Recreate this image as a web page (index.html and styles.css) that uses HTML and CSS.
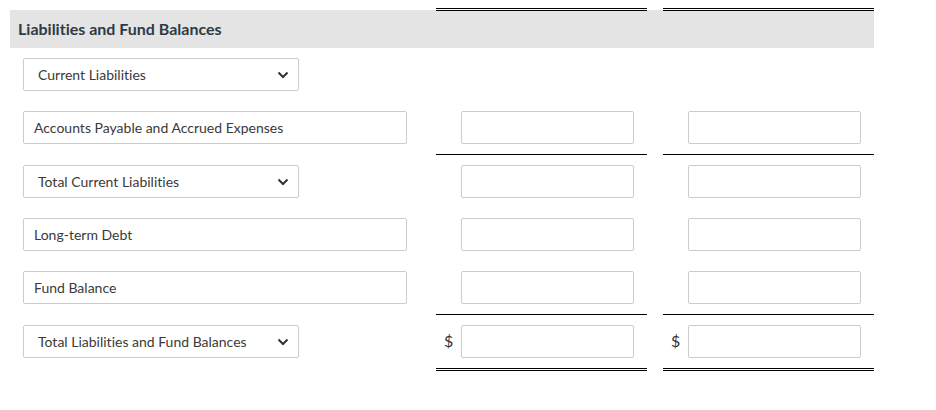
FILE: index.html
```html
<!DOCTYPE html>
<html>
<head>
<meta charset="utf-8">
<link rel="stylesheet" href="styles.css">
</head>
<body>
<div class="sheet">
  <div class="row top">
    <div class="label-cell"></div>
    <div class="num-cell dbl"></div>
    <div class="spacer"></div>
    <div class="num-cell dbl"></div>
  </div>
  <div class="heading">Liabilities and Fund Balances</div>

  <div class="row">
    <div class="label-cell">
      <div class="select"><span>Current Liabilities</span><svg class="chev" width="12" height="8" viewBox="0 0 12 8"><polyline points="1.5,1.5 6,6 10.5,1.5" fill="none" stroke="#333" stroke-width="2"/></svg></div>
    </div>
    <div class="num-cell"></div>
    <div class="spacer"></div>
    <div class="num-cell"></div>
  </div>

  <div class="row">
    <div class="label-cell"><div class="text">Accounts Payable and Accrued Expenses</div></div>
    <div class="num-cell single"><div class="box"></div></div>
    <div class="spacer"></div>
    <div class="num-cell single"><div class="box"></div></div>
  </div>

  <div class="row">
    <div class="label-cell">
      <div class="select"><span>Total Current Liabilities</span><svg class="chev" width="12" height="8" viewBox="0 0 12 8"><polyline points="1.5,1.5 6,6 10.5,1.5" fill="none" stroke="#333" stroke-width="2"/></svg></div>
    </div>
    <div class="num-cell"><div class="box"></div></div>
    <div class="spacer"></div>
    <div class="num-cell"><div class="box"></div></div>
  </div>

  <div class="row">
    <div class="label-cell"><div class="text">Long-term Debt</div></div>
    <div class="num-cell"><div class="box"></div></div>
    <div class="spacer"></div>
    <div class="num-cell"><div class="box"></div></div>
  </div>

  <div class="row">
    <div class="label-cell"><div class="text">Fund Balance</div></div>
    <div class="num-cell single"><div class="box"></div></div>
    <div class="spacer"></div>
    <div class="num-cell single"><div class="box"></div></div>
  </div>

  <div class="row">
    <div class="label-cell">
      <div class="select"><span>Total Liabilities and Fund Balances</span><svg class="chev" width="12" height="8" viewBox="0 0 12 8"><polyline points="1.5,1.5 6,6 10.5,1.5" fill="none" stroke="#333" stroke-width="2"/></svg></div>
    </div>
    <div class="num-cell dbl"><span class="dollar">$</span><div class="box"></div></div>
    <div class="spacer"></div>
    <div class="num-cell dbl"><span class="dollar">$</span><div class="box"></div></div>
  </div>
</div>
</body>
</html>
```
FILE: styles.css
```css
html, body {
  margin: 0;
  padding: 0;
  background: #ffffff;
}
body {
  font-family: Lato, "Open Sans", sans-serif;
  color: #3a3a3a;
  font-variant-ligatures: none;
}
.sheet {
  margin-left: 10px;
  width: 864px;
}
.row {
  display: flex;
  align-items: stretch;
}
.label-cell {
  width: 426px;
  padding: 10px 0 10px 13px;
  box-sizing: border-box;
}
.num-cell {
  width: 211px;
  padding: 10px 0 10px 25px;
  box-sizing: border-box;
  position: relative;
}
.spacer {
  width: 16px;
}
.row.top .label-cell,
.row.top .num-cell {
  height: 11px;
  padding: 0;
}
.num-cell.dbl {
  border-bottom: 3px double #000;
}
.num-cell.single {
  border-bottom: 1px solid #000;
}
.row.top + .heading {
  margin-top: -1px;
}
.heading {
  height: 38px;
  background: #e4e4e4;
  box-sizing: border-box;
  padding: 9px 0 0 8px;
  font-weight: 700;
  font-size: 16px;
  color: #2d3b45;
  line-height: 20px;
}
.select,
.text,
.box {
  height: 33px;
  box-sizing: border-box;
  border: 1px solid #cccccc;
  border-radius: 2px;
  background: #fff;
}
.select {
  width: 276px;
  display: flex;
  align-items: center;
  justify-content: space-between;
  padding: 0 9px 0 14px;
  font-size: 14px;
}
.text {
  width: 384px;
  padding: 0 10px;
  display: flex;
  align-items: center;
  font-size: 14px;
}
.box {
  width: 173px;
}
.chev {
  display: block;
}
.dollar {
  position: absolute;
  left: 8px;
  top: 16px;
  font-size: 16px;
  line-height: 20px;
  color: #333;
}
```
